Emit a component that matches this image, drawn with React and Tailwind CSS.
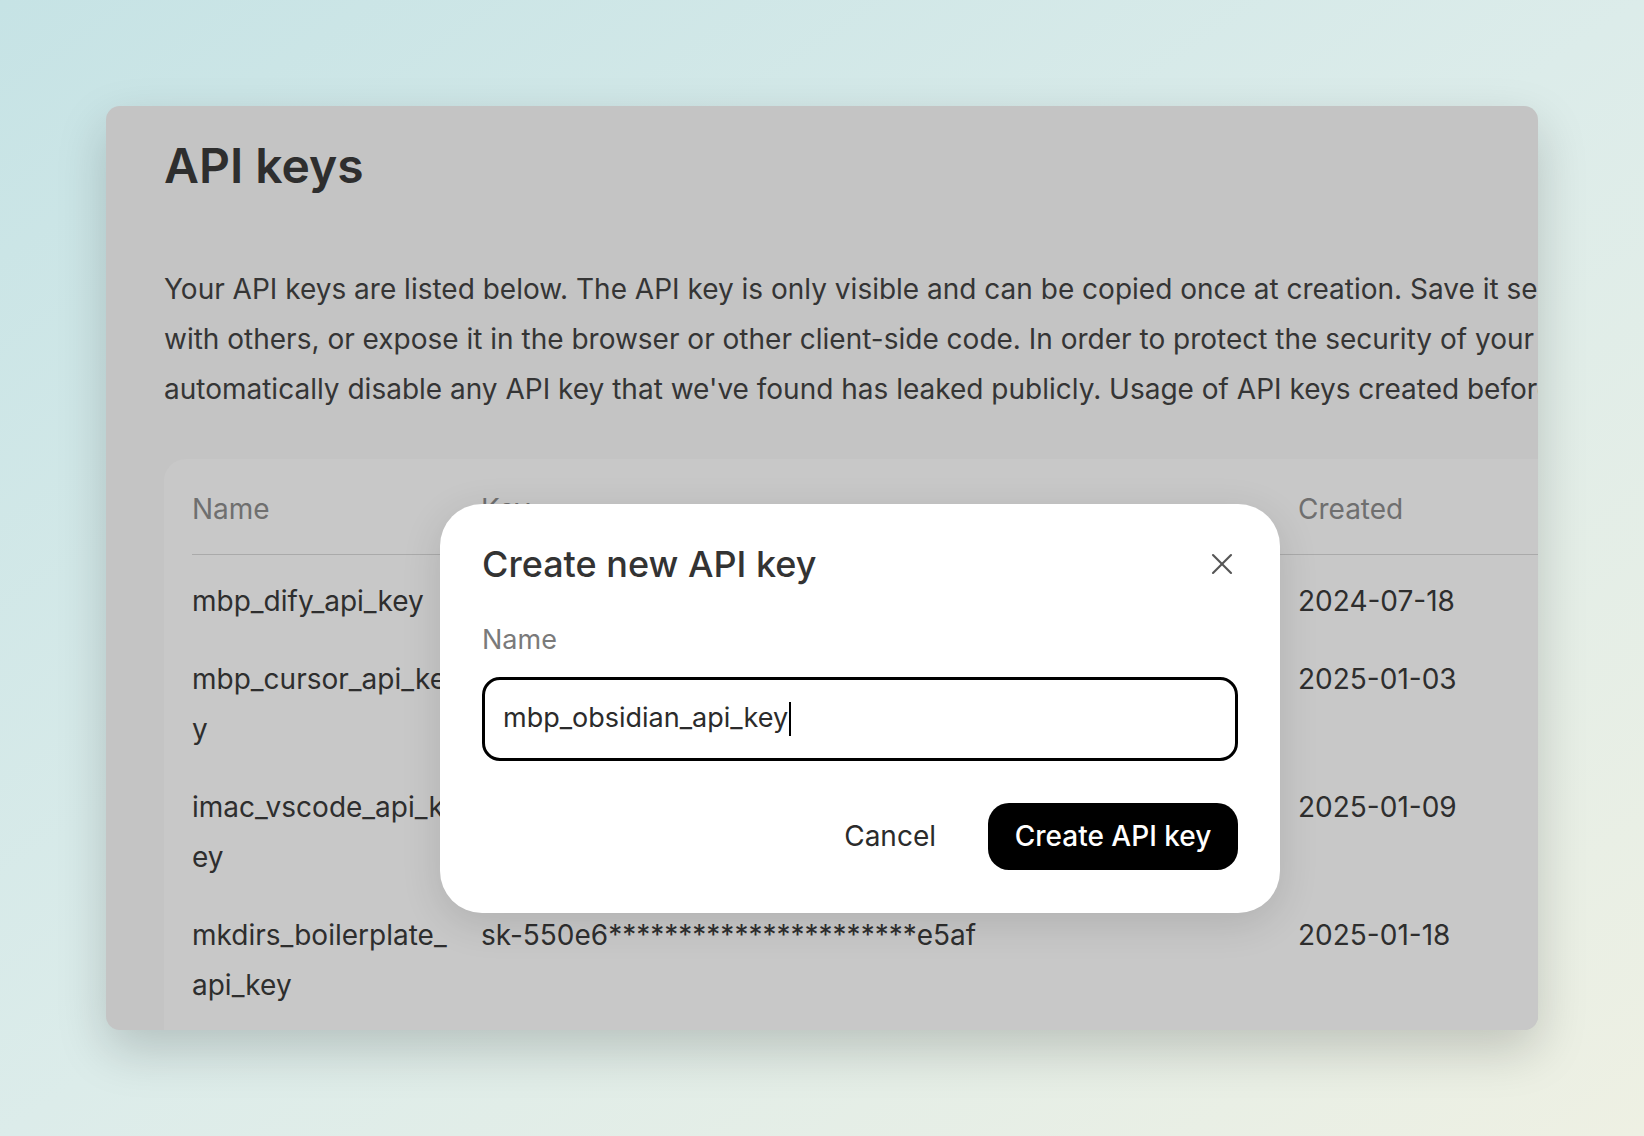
import { X } from 'lucide-react'

const rows = [
  { name: ['mbp_dify_api_key'], key: 'sk-2a1f4**********************9c0d', created: '2024-07-18' },
  { name: ['mbp_cursor_api_ke', 'y'], key: 'sk-7b3e2**********************41aa', created: '2025-01-03' },
  { name: ['imac_vscode_api_k', 'ey'], key: 'sk-c90d1**********************7f2b', created: '2025-01-09' },
  { name: ['mkdirs_boilerplate_', 'api_key'], key: 'sk-550e6**********************e5af', created: '2025-01-18' },
]

export default function App() {
  return (
    <div
      className="relative w-[1644px] h-[1136px] overflow-hidden bg-gradient-to-br from-[#c6e3e5] via-[#dcecea] to-[#eef0e3]"
      style={{ fontFamily: 'Inter, "Noto Sans", sans-serif' }}
    >
      <div className="absolute left-[106px] top-[106px] w-[1432px] h-[924px] rounded-[14px] bg-[#c4c4c4] overflow-hidden shadow-[0_20px_50px_rgba(0,0,0,0.18)]">
        <div className="pl-[58px] pt-[28px] text-[#333]">
          <h1 className="text-[48px] font-semibold leading-[64px] text-[#2e2e2e]">API keys</h1>
          <div className="mt-[66px] text-[28px] leading-[50px] whitespace-nowrap text-[#353535]">
            <p>Your API keys are listed below. The API key is only visible and can be copied once at creation. Save it securely and do not share it</p>
            <p>with others, or expose it in the browser or other client-side code. In order to protect the security of your account, we may also</p>
            <p>automatically disable any API key that we've found has leaked publicly. Usage of API keys created before this date is not shown.</p>
          </div>
          <div className="mt-[45px] w-[1400px] rounded-t-[22px] bg-[#c8c8c8] pl-[28px] pt-[4px] pb-[40px]">
            <div className="flex text-[28px] text-[#6f6f6f] h-[92px] items-center border-b border-[#aaa]">
              <div className="w-[289px]">Name</div>
              <div className="w-[817px]">Key</div>
              <div>Created</div>
            </div>
            {rows.map((r) => (
              <div key={r.created} className="flex text-[28px] leading-[50px] text-[#2e2e2e] pt-[21px] pb-[7px]">
                <div className="w-[289px] pr-4 overflow-hidden">
                  {r.name.map((n) => <div key={n} className="whitespace-nowrap">{n}</div>)}
                </div>
                <div className="w-[817px]">{r.key}</div>
                <div>{r.created}</div>
              </div>
            ))}
          </div>
        </div>
      </div>

      <div className="absolute left-[440px] top-[504px] w-[840px] h-[409px] rounded-[42px] bg-white px-[42px] pt-[34px] shadow-[0_10px_40px_rgba(0,0,0,0.12)]">
        <div className="flex items-center justify-between">
          <h2 className="text-[36px] font-medium text-[#333] leading-[52px]">Create new API key</h2>
          <X className="w-[36px] h-[36px] text-[#555] mr-[-2px]" strokeWidth={1.4} />
        </div>
        <div className="mt-[30px] text-[27px] text-[#7a7a7a]">Name</div>
        <div className="mt-[16px] h-[84px] rounded-[18px] border-[3px] border-black flex items-center px-[18px] text-[27px] text-[#2b2b2b]">
          mbp_obsidian_api_key<span className="inline-block w-[2px] h-[34px] bg-black ml-[1px]" />
        </div>
        <div className="mt-[42px] flex justify-end items-center gap-[52px]">
          <span className="text-[28px] text-[#2b2b2b]">Cancel</span>
          <button className="h-[67px] w-[250px] rounded-[21px] bg-black text-white text-[28px] font-medium">Create API key</button>
        </div>
      </div>
    </div>
  )
}
